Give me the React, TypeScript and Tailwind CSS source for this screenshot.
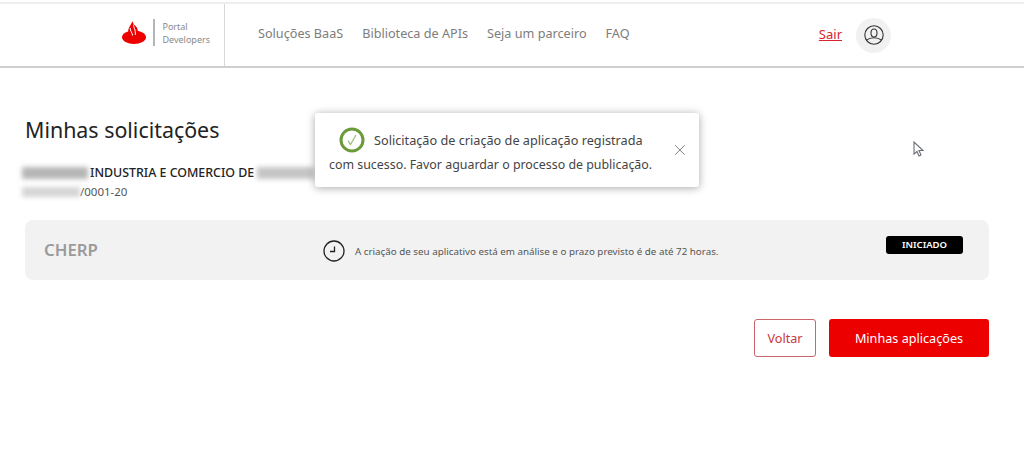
import { X } from 'lucide-react';

const font = "[font-family:'Noto_Sans',sans-serif]";

function Flame() {
  return (
    <svg viewBox="0 0 24 23" className="h-[23px] w-[24px] shrink-0" aria-hidden>
      <ellipse cx="12" cy="16.300" rx="12" ry="6.700" fill="#ec0000" />
      <path
        fill="#ec0000"
        d="M10.500 0C9.500 3 7.500 5 6.500 8c-1 3 1 5 2 6.500h6c2-3.500 1.500-6.500 0-8.500-1.500-2-3.700-3-4-6z"
      />
      <path
        d="M8.200 7c-.4 2.800 2.300 4.500 2.300 7.500M11.800 3.500c-1 3 2.400 5 1.400 10.500"
        fill="none"
        stroke="white"
        strokeWidth="1"
      />
    </svg>
  );
}

function UserIcon() {
  return (
    <svg viewBox="0 0 20 20" className="size-[20px] fill-none stroke-[#333]" strokeWidth="1.100" aria-hidden>
      <circle cx="10" cy="10" r="9.200" />
      <ellipse cx="10" cy="8" rx="3" ry="4" />
      <path d="M2.600 15.200c2-1.800 4.500-2.500 7.400-2.500s5.400.7 7.400 2.500" />
    </svg>
  );
}

function CheckBadge() {
  return (
    <svg viewBox="0 0 26 26" className="size-[26px] shrink-0" aria-hidden>
      <circle cx="13" cy="13" r="11" fill="white" stroke="#6a9a3a" strokeWidth="3" />
      <path d="M9 13.500l2.500 4L17 8" fill="none" stroke="#9cbc78" strokeWidth="1.200" />
    </svg>
  );
}

function ClockIcon() {
  return (
    <svg viewBox="0 0 22 22" className="mt-[2px] size-[22px] shrink-0 fill-none stroke-[#222]" strokeWidth="1.300" aria-hidden>
      <circle cx="11" cy="11" r="10" />
      <path d="M11.500 6.500v5H7" />
    </svg>
  );
}

function Cursor() {
  return (
    <svg viewBox="0 0 12 17" className="absolute left-[913px] top-[141px] h-[17px] w-[12px]" aria-hidden>
      <path d="M1 1v12l3-2.500 2 4.500 2-1-2-4.500h4z" fill="white" stroke="#6b6f76" strokeWidth="1.100" />
    </svg>
  );
}

export default function App() {
  return (
    <div className={`relative h-[450px] w-[1024px] overflow-hidden bg-white ${font}`}>
      <header className="mt-[2px] flex h-[66px] items-stretch border-y-2 border-t-[#eeeeee] border-b-[#cfcfcf] pr-[133px]">
        <div className="flex w-[225px] items-center justify-end gap-[7px] border-r border-[#d8d8d8] pb-[5px] pr-[14px]">
          <Flame />
          <div className="h-[27px] w-[2px] bg-[#b5b5b5]" />
          <div className="text-[9px] leading-[13px] text-[#8a8a8a]">
            <div>Portal</div>
            <div>Developers</div>
          </div>
        </div>
        <nav className="flex items-center gap-[19px] pb-[3px] pl-[33px] text-[12.650px] text-[#7d7d7d]">
          <span>Soluções BaaS</span>
          <span>Biblioteca de APIs</span>
          <span>Seja um parceiro</span>
          <span>FAQ</span>
        </nav>
        <div className="ml-auto flex items-center gap-[14px]">
          <span className="text-[13px] text-[#d8242c] underline">Sair</span>
          <span className="flex size-[35px] items-center justify-center rounded-full bg-[#f1f1f1]">
            <UserIcon />
          </span>
        </div>
      </header>

      <main className="px-[25px] pt-[47px]">
        <h1 className="text-[21.400px] leading-[30px] text-[#222]">Minhas solicitações</h1>
        <div className="mt-[19px] flex h-[18px] items-center text-[12.400px] font-medium text-[#222]">
          <span className="-ml-[3px] mr-[2px] h-[12px] w-[66px] bg-[#b5b5b5] blur-[2.500px]" />
          <span>INDUSTRIA E COMERCIO DE</span>
          <span className="ml-[3px] h-[12px] w-[57px] bg-[#c5c5c5] blur-[2.500px]" />
        </div>
        <div className="mt-[2px] flex h-[16px] items-center text-[11.500px] text-[#555]">
          <span className="-ml-[3px] h-[10px] w-[58px] bg-[#d5d5d5] blur-[2.500px]" />
          <span>/0001-20</span>
        </div>

        <section className="mt-[20px] flex h-[60px] w-[964px] items-center rounded-[8px] bg-[#f2f2f2] pl-[19px] pr-[26px]">
          <span className="w-[279px] pb-[1px] text-[16.800px] font-semibold text-[#9a9a9a]">CHERP</span>
          <ClockIcon />
          <span className="ml-[10px] pt-[4px] text-[9.800px] text-[#555]">
            A criação de seu aplicativo está em análise e o prazo previsto é de até 72 horas.
          </span>
          <span className="ml-auto mb-[10px] flex h-[18px] w-[77px] items-center justify-center rounded-[3px] bg-black text-[9.500px] font-semibold text-white">
            INICIADO
          </span>
        </section>

        <div className="mt-[39px] flex w-[964px] justify-end gap-[13px]">
          <button type="button" className="h-[38px] w-[62px] rounded-[3px] border border-[#c9666a] text-[12.650px] text-[#c8383c]">
            Voltar
          </button>
          <button type="button" className="h-[38px] w-[160px] rounded-[3px] bg-[#ec0000] text-[12.650px] text-white">
            Minhas aplicações
          </button>
        </div>
      </main>

      <div className="absolute left-[315px] top-[113px] h-[74px] w-[384px] rounded-[3px] bg-white shadow-[0_1px_8px_rgba(0,0,0,0.35)]">
        <div className="flex h-full items-center justify-between pl-[14px] pr-[10px]">
          <div className="w-[345px] pt-[3px] leading-[24px] text-[#444]">
            <p className="flex items-center gap-[9px] pl-[10px] text-[12.700px]">
              <CheckBadge />
              Solicitação de criação de aplicação registrada
            </p>
            <p className="text-[12.400px]">com sucesso. Favor aguardar o processo de publicação.</p>
          </div>
          <X className="size-[18px] text-[#555]" strokeWidth={1} />
        </div>
      </div>

      <Cursor />
    </div>
  );
}
